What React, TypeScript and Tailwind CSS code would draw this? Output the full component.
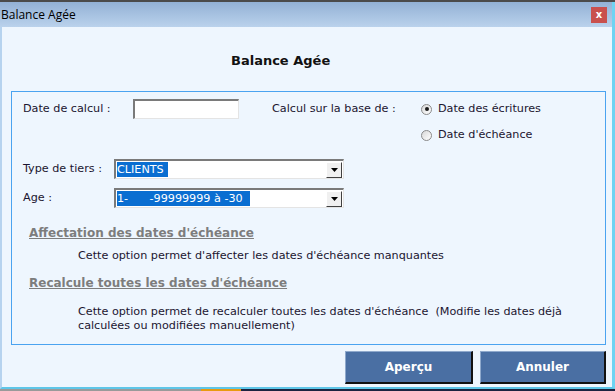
import React from "react";

const font = { fontFamily: '"DejaVu Sans", Verdana, sans-serif' };

function Radio({ checked }: { checked?: boolean }) {
  return (
    <div className="relative w-[11px] h-[11px] rounded-full border border-[#8a8a8a] bg-gradient-to-br from-[#d8d8d8] to-white flex items-center justify-center">
      {checked && <div className="w-[4px] h-[4px] rounded-full bg-[#1a1a1a]" />}
    </div>
  );
}

function Select({ value, hlWidth }: { value: string; hlWidth: string }) {
  return (
    <div className="w-[230px] h-[20px] border-t-2 border-l-2 border-[#7a7a7a] border-b border-r border-b-[#e4e4e4] border-r-[#e4e4e4] bg-white flex items-center">
      <div className="flex-1 h-full flex items-center pl-[1px]">
        <div className={`${hlWidth} h-[15px] bg-[#0a6ed1] text-white text-[11.2px] leading-[15px] whitespace-pre`} style={font}>
          {value}
        </div>
      </div>
      <div className="w-[16px] h-[16px] mr-[1px] bg-[#f0f0f0] border border-t-white border-l-white border-b-[#404040] border-r-[#404040] flex items-center justify-center">
        <svg width="7" height="4" viewBox="0 0 7 4"><path d="M0 0h7L3.5 4z" fill="#000" /></svg>
      </div>
    </div>
  );
}

export default function App() {
  return (
    <div className="w-[615px] h-[391px] flex flex-col overflow-hidden bg-[#eef6fe] text-[#1b1530]" style={font}>
      <div className="h-[2px] bg-[#4b4b4b]" />
      <div className="h-[25px] bg-gradient-to-b from-[#93b1d5] to-[#bad2ec] flex items-center justify-between pr-[5px] border-r-[3px] border-[#6fd3f2]">
        <span className="pl-[1px] text-[12px] text-black" style={{ fontFamily: '"Open Sans", "Noto Sans", sans-serif' }}>Balance Agée</span>
        <div className="w-[16px] h-[16px] bg-[#c9504d] flex items-center justify-center text-white text-[10px] font-bold leading-none">x</div>
      </div>
      <div className="flex-1 flex flex-col border-l-[2px] border-[#b6d3ef] border-r-[3px] border-r-[#6fd3f2] border-b-[2px] border-b-[#5ec6e8]">
        <div className="h-[64px] flex items-center pl-[229px] pt-[3px]">
          <span className="text-[13px] font-bold text-[#111]">Balance Agée</span>
        </div>
        <div className="ml-[9px] w-[595px] h-[254px] border border-[#4aa3f0] flex flex-col pl-[11px] text-[11.2px]">
          <div className="mt-[7px] h-[20px] flex items-center">
            <span className="w-[110px]">Date de calcul :</span>
            <div className="w-[106px] h-[20px] bg-white border-t-2 border-l-2 border-[#7a7a7a] border-b border-r border-b-[#e4e4e4] border-r-[#e4e4e4]" />
            <span className="ml-[33px] w-[149px]">Calcul sur la base de :</span>
            <Radio checked />
            <span className="ml-[6px]">Date des écritures</span>
          </div>
          <div className="mt-[7px] h-[18px] flex items-center pl-[398px]">
            <Radio />
            <span className="ml-[6px]">Date d'échéance</span>
          </div>
          <div className="mt-[15px] h-[20px] flex items-center">
            <span className="w-[91px]">Type de tiers :</span>
            <Select value="CLIENTS" hlWidth="w-[51px]" />
          </div>
          <div className="mt-[9px] h-[20px] flex items-center">
            <span className="w-[91px]">Age :</span>
            <Select value={"1-      -99999999 à -30"} hlWidth="w-[133px]" />
          </div>
          <div className="mt-[17px] pl-[6px] text-[12px] font-bold text-[#7d7d7d] underline leading-[16px]">Affectation des dates d'échéance</div>
          <div className="mt-[8px] pl-[55px] leading-[14px]">Cette option permet d'affecter les dates d'échéance manquantes</div>
          <div className="mt-[12px] pl-[6px] text-[12px] font-bold text-[#7d7d7d] underline leading-[16px]">Recalcule toutes les dates d'échéance</div>
          <div className="mt-[14px] pl-[55px] leading-[14px] whitespace-pre">{"Cette option permet de recalculer toutes les dates d'échéance  (Modifie les dates déjà\ncalculées ou modifiées manuellement)"}</div>
        </div>
        <div className="mt-[6px] flex gap-[7px] pl-[343px]">
          <button className="w-[128px] h-[33px] bg-[#4a6fa3] border-t border-l border-[#8fa9cc] border-b-2 border-r-2 border-b-[#111] border-r-[#111] text-white text-[12px] font-bold" style={font}>Aperçu</button>
          <button className="w-[126px] h-[33px] bg-[#4a6fa3] border-t border-l border-[#8fa9cc] border-b-2 border-r-2 border-b-[#111] border-r-[#111] text-white text-[12px] font-bold" style={font}>Annuler</button>
        </div>
      </div>
      <div className="h-[2px] flex">
        <div className="w-[201px] bg-[#9a9a9a]" />
        <div className="w-[40px] bg-[#e89a10]" />
        <div className="flex-1 bg-[#1c2340]" />
      </div>
    </div>
  );
}
